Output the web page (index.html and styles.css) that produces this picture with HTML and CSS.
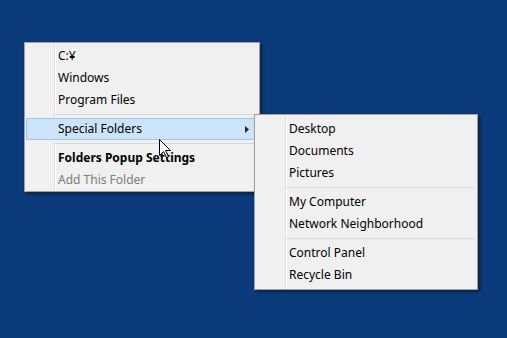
FILE: index.html
```html
<!DOCTYPE html>
<html>
<head>
<meta charset="utf-8">
<link rel="stylesheet" href="styles.css">
</head>
<body>
<div class="desktop">
  <div class="menu main">
    <div class="item">C:¥</div>
    <div class="item">Windows</div>
    <div class="item">Program Files</div>
    <div class="sep"></div>
    <div class="item hot"><span class="label">Special Folders</span><svg class="arrow" width="4" height="7" viewBox="0 0 4 7"><polygon points="0,0 4,3.5 0,7" fill="#222"/></svg></div>
    <div class="sep"></div>
    <div class="item bold">Folders Popup Settings</div>
    <div class="item disabled">Add This Folder</div>
  </div>
  <div class="menu sub">
    <div class="item">Desktop</div>
    <div class="item">Documents</div>
    <div class="item">Pictures</div>
    <div class="sep"></div>
    <div class="item">My Computer</div>
    <div class="item">Network Neighborhood</div>
    <div class="sep"></div>
    <div class="item">Control Panel</div>
    <div class="item">Recycle Bin</div>
  </div>
  <svg class="cursor" width="13" height="20" viewBox="0 0 13 20">
    <polygon points="0.5,0.5 0.5,16.5 4.5,12.5 7.5,18.5 9.5,17.5 6.5,11.5 11.5,11.5" fill="#fff" stroke="#000" stroke-width="1" stroke-linejoin="miter"/>
  </svg>
</div>
</body>
</html>
```
FILE: styles.css
```css
html, body {
  margin: 0;
  padding: 0;
}
body {
  width: 507px;
  height: 338px;
  background: #0c3b7b;
  overflow: hidden;
  font-family: "Noto Sans", "Open Sans", sans-serif;
  font-size: 12px;
  color: #000;
}
.desktop {
  position: relative;
  width: 507px;
  height: 338px;
}
.menu {
  position: absolute;
  box-sizing: border-box;
  background-color: #f0f0f0;
  border: 1px solid #a0a0a0;
  box-shadow: 2px 2px 3px rgba(0, 0, 0, 0.45);
  display: flex;
  flex-direction: column;
}
.main {
  left: 24px;
  top: 42px;
  width: 236px;
  height: 150px;
  padding: 2px 2px 0 1px;
  z-index: 1;
  background-image: linear-gradient(to right, transparent 29px, #dedede 29px, #dedede 30px, #ffffff 30px, #ffffff 31px, transparent 31px);
}
.sub {
  left: 254px;
  top: 114px;
  width: 224px;
  height: 176px;
  padding: 3px 2px 3px 2px;
  z-index: 2;
  background-image: linear-gradient(to right, transparent 30px, #dedede 30px, #dedede 31px, #ffffff 31px, #ffffff 32px, transparent 32px);
}
.item {
  box-sizing: border-box;
  height: 22px;
  line-height: 20px;
  border: 1px solid transparent;
  padding-left: 31px;
  padding-right: 7px;
  display: flex;
  align-items: center;
  white-space: nowrap;
}
.item.hot {
  background: #cce4f7;
  border-color: #99c9ef;
}
.label {
  flex: 1;
}
.arrow {
  display: block;
}
.bold {
  font-weight: bold;
}
.disabled {
  color: #7d7d7d;
}
.sep {
  height: 7px;
  margin-left: 28px;
  background: linear-gradient(to bottom, transparent 3px, #d7d7d7 3px, #d7d7d7 4px, transparent 4px);
}
.cursor {
  position: absolute;
  left: 159px;
  top: 139px;
  z-index: 3;
}
```
